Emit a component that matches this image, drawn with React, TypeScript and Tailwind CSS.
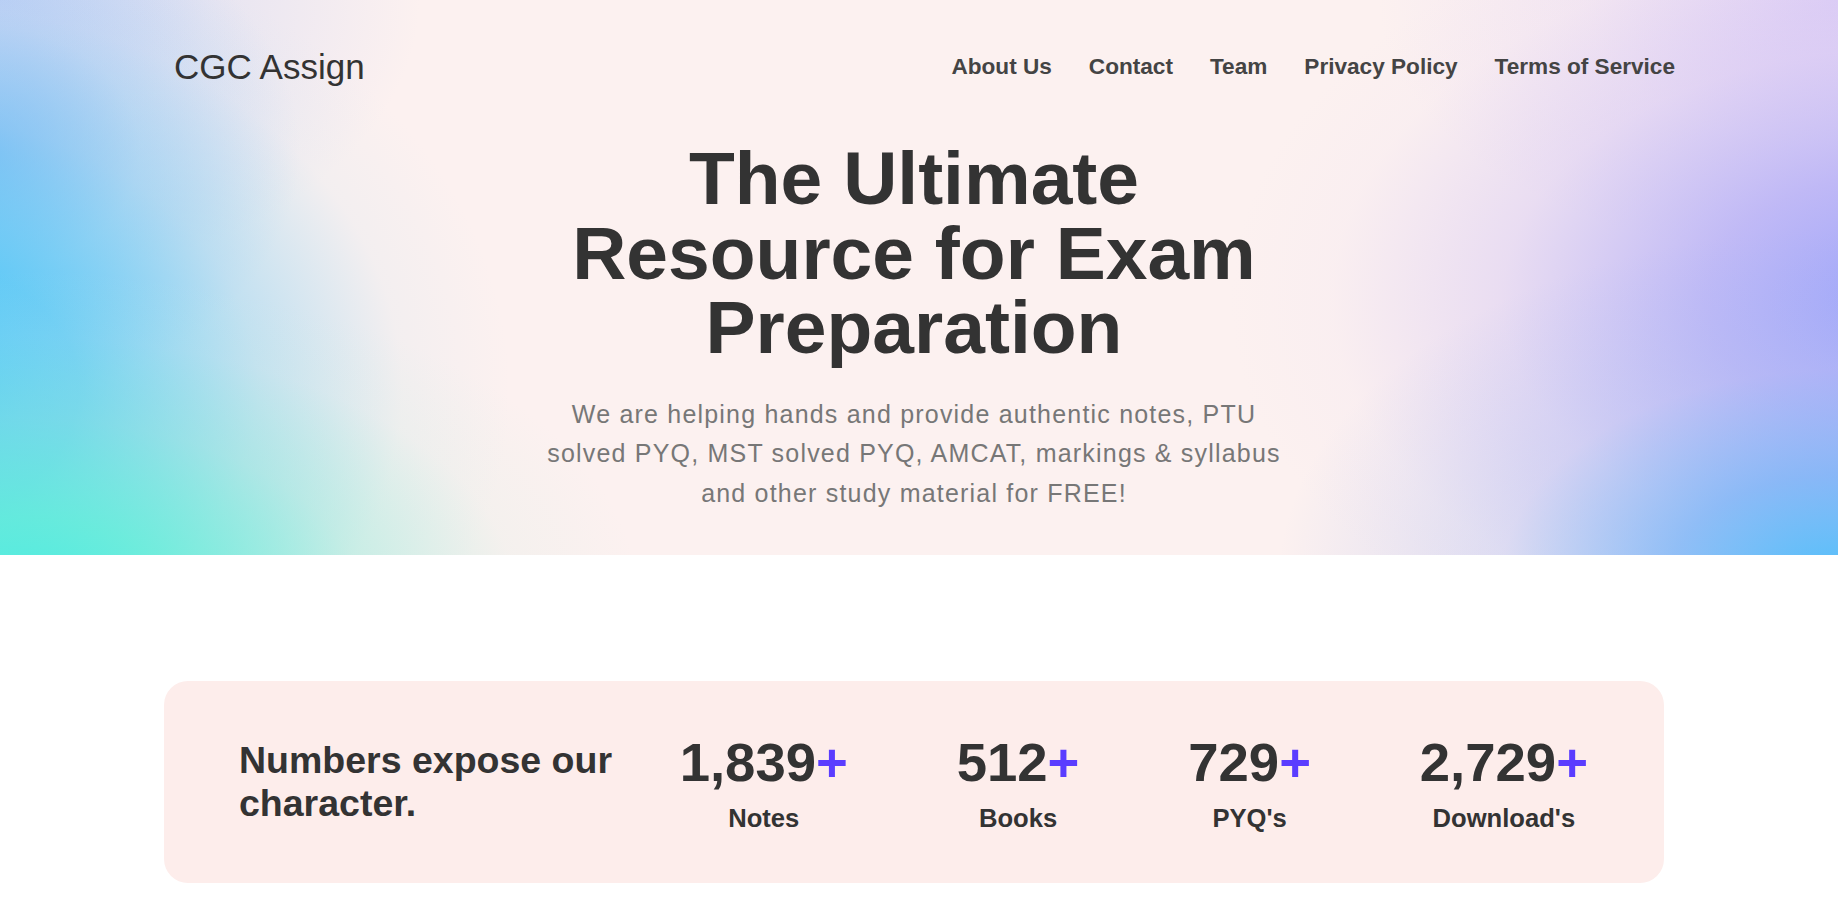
import React from 'react'

const navLinks = ['About Us', 'Contact', 'Team', 'Privacy Policy', 'Terms of Service']

const stats = [
  { value: '1,839', label: 'Notes' },
  { value: '512', label: 'Books' },
  { value: '729', label: "PYQ's" },
  { value: '2,729', label: "Download's" },
]

function Header() {
  return (
    <header className="flex items-center justify-between pl-[174px] pr-[163px] pt-[47px]">
      <a className="text-[35px] leading-[39px] text-[#333333]">CGC Assign</a>
      <nav className="flex items-center gap-[37px]">
        {navLinks.map((link) => (
          <a key={link} className="text-[22.6px] font-bold leading-[26px] text-[#444444]">
            {link}
          </a>
        ))}
      </nav>
    </header>
  )
}

// soft colour blobs at both sides of the hero
const heroBg =
  'bg-[#fcf1f0] [background-image:radial-gradient(ellipse_620px_330px_at_20px_600px,#4aece0_0%,rgba(95,240,215,0.8)_25%,rgba(140,236,215,0.42)_55%,rgba(200,238,225,0.15)_80%,rgba(252,241,240,0)_100%),radial-gradient(ellipse_600px_470px_at_-90px_390px,#48c8fa_0%,rgba(80,198,247,0.85)_28%,rgba(125,205,242,0.45)_58%,rgba(190,225,240,0.14)_82%,rgba(252,241,240,0)_100%),radial-gradient(ellipse_320px_250px_at_-20px_150px,rgba(125,180,246,0.9)_0%,rgba(160,200,245,0.4)_50%,rgba(252,241,240,0)_100%),radial-gradient(ellipse_420px_280px_at_0px_0px,#c3cff5_0%,rgba(200,210,244,0.4)_50%,rgba(252,241,240,0)_100%),radial-gradient(ellipse_560px_350px_at_1838px_580px,#52bffa_0%,rgba(105,175,248,0.7)_30%,rgba(160,180,246,0.32)_60%,rgba(252,241,240,0)_100%),radial-gradient(ellipse_680px_420px_at_1910px_300px,#9ca3fa_0%,rgba(170,165,248,0.72)_30%,rgba(200,185,246,0.36)_60%,rgba(230,215,244,0.1)_85%,rgba(252,241,240,0)_100%),radial-gradient(ellipse_460px_260px_at_1838px_0px,#dfd0f5_0%,rgba(230,215,244,0.4)_55%,rgba(252,241,240,0)_100%)]'

function Hero() {
  return (
    <section className={'h-[555px] ' + heroBg}>
      <Header />
      <div className="flex flex-col items-center pr-[10px]">
        <h1 className="mt-[55.4px] w-[730px] text-center text-[75px] font-bold leading-[74.5px] text-[#333333]">
          The Ultimate Resource for Exam Preparation
        </h1>
        <p className="mt-[30px] w-[750px] text-center text-[25px] leading-[39.4px] tracking-[1.2px] text-[#777777]">
          We are helping hands and provide authentic notes, PTU solved PYQ, MST solved PYQ, AMCAT,
          markings &amp; syllabus and other study material for FREE!
        </p>
      </div>
    </section>
  )
}

function Stats() {
  return (
    <section className="pt-[126px] pb-[40px]">
      <div className="ml-[164px] flex h-[202px] w-[1500px] items-center rounded-[24px] bg-[#fdedeb] pl-[75px] pr-[76px]">
        <h2 className="flex-1 text-[37.5px] font-bold leading-[42.6px] text-[#333333]">
          Numbers expose our character.
        </h2>
        <div className="flex items-start gap-[108.8px]">
          {stats.map((s) => (
            <div key={s.label} className="flex flex-col items-center">
              <span className="text-[54.5px] font-bold leading-[64px] text-[#333333]">
                {s.value}
                <span className="text-[#5a3dff]">+</span>
              </span>
              <span className="mt-[8px] text-[25.6px] font-bold leading-[30px] text-[#333333]">
                {s.label}
              </span>
            </div>
          ))}
        </div>
      </div>
    </section>
  )
}

export default function App() {
  return (
    <div className="min-h-screen bg-white font-['Liberation_Sans',Arial,sans-serif]">
      <Hero />
      <Stats />
    </div>
  )
}
